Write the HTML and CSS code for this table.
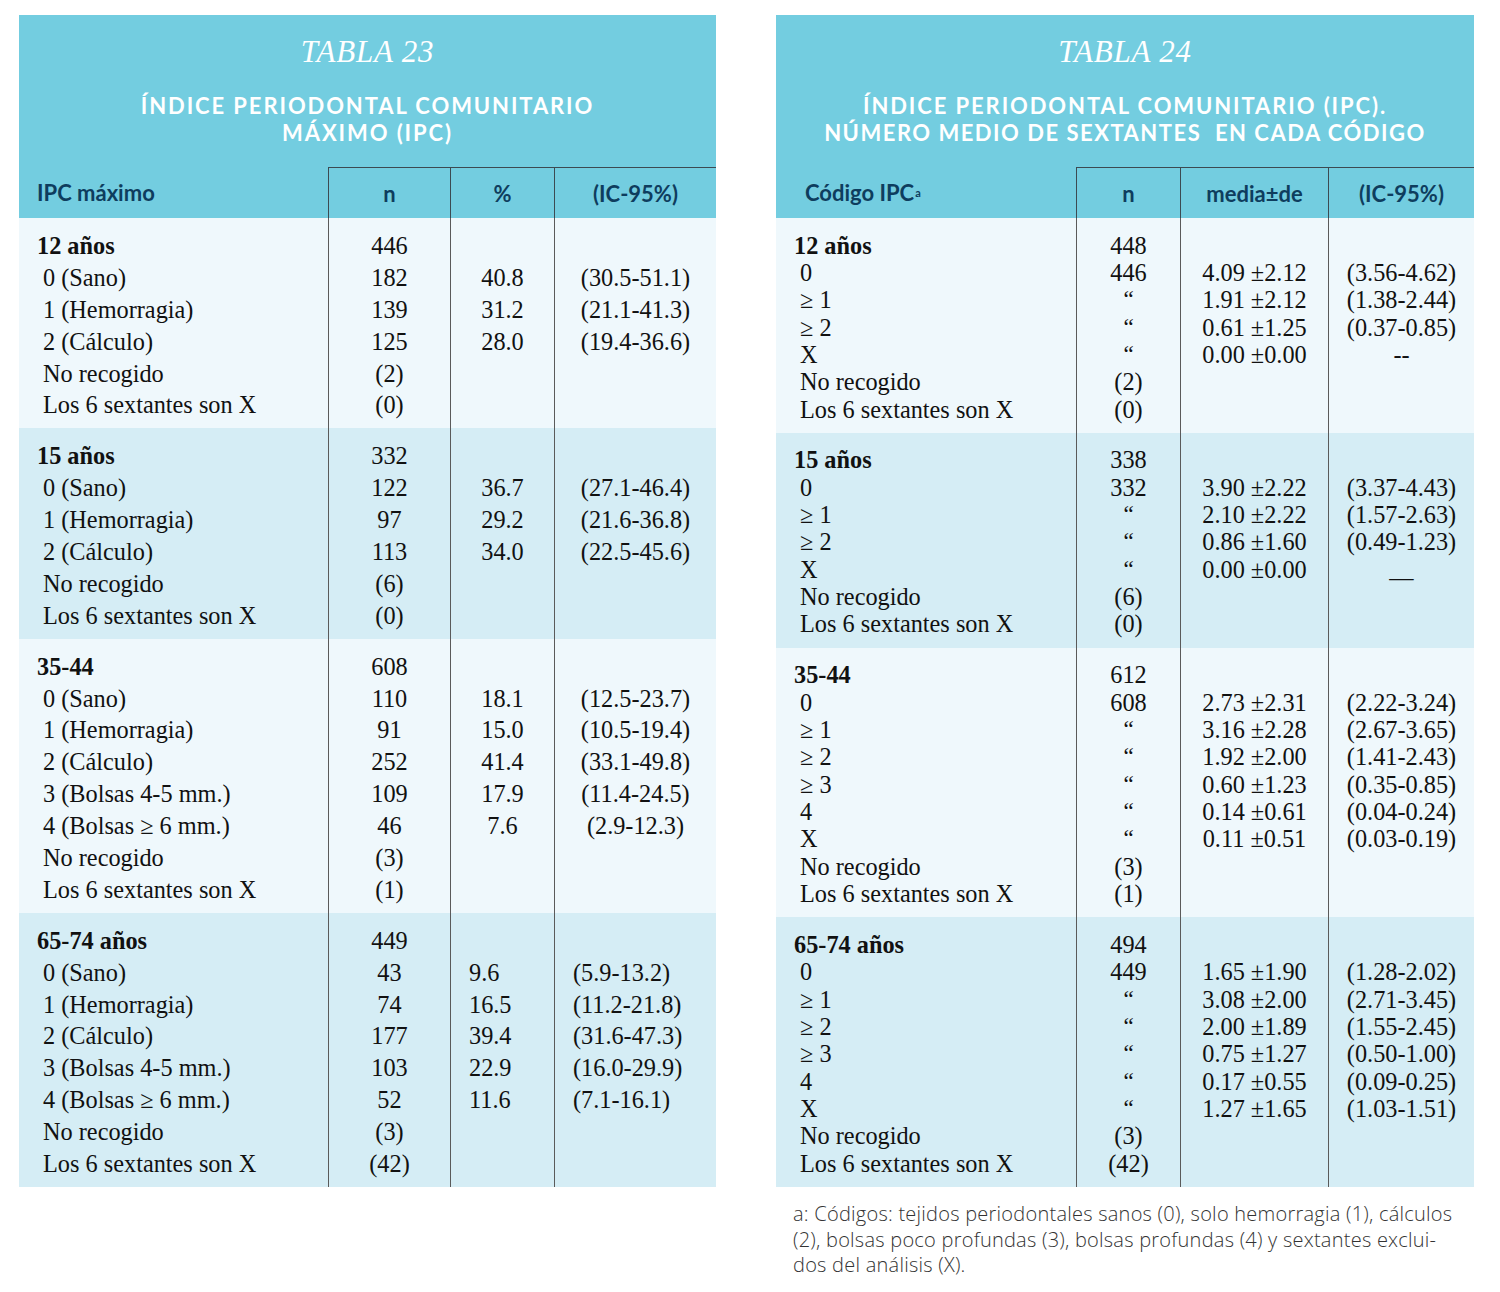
FILE: index.html
```html
<!DOCTYPE html>
<html lang="es">
<head>
<meta charset="utf-8">
<title>Tablas 23 y 24</title>
<link rel="stylesheet" href="styles.css">
</head>
<body>
<div class="page">
  <section class="tbl t23">
    <div class="thead">
      <div class="title">TABLA 23</div>
      <div class="subtitle">ÍNDICE PERIODONTAL COMUNITARIO<br>MÁXIMO (IPC)</div>
    </div>
    <div class="grid colhead">
      <div class="h1">IPC máximo</div><div class="hc">n</div><div class="hc">%</div><div class="hc">(IC-95%)</div>
    </div>
    <div class="grid group light">
      <div class="col lab"><div class="b">12 años</div><div>0 (Sano)</div><div>1 (Hemorragia)</div><div>2 (Cálculo)</div><div>No recogido</div><div>Los 6 sextantes son X</div></div>
      <div class="col num"><div>446</div><div>182</div><div>139</div><div>125</div><div>(2)</div><div>(0)</div></div>
      <div class="col num"><div></div><div>40.8</div><div>31.2</div><div>28.0</div></div>
      <div class="col num"><div></div><div>(30.5-51.1)</div><div>(21.1-41.3)</div><div>(19.4-36.6)</div></div>
    </div>
    <div class="grid group dark">
      <div class="col lab"><div class="b">15 años</div><div>0 (Sano)</div><div>1 (Hemorragia)</div><div>2 (Cálculo)</div><div>No recogido</div><div>Los 6 sextantes son X</div></div>
      <div class="col num"><div>332</div><div>122</div><div>97</div><div>113</div><div>(6)</div><div>(0)</div></div>
      <div class="col num"><div></div><div>36.7</div><div>29.2</div><div>34.0</div></div>
      <div class="col num"><div></div><div>(27.1-46.4)</div><div>(21.6-36.8)</div><div>(22.5-45.6)</div></div>
    </div>
    <div class="grid group light">
      <div class="col lab"><div class="b">35-44</div><div>0 (Sano)</div><div>1 (Hemorragia)</div><div>2 (Cálculo)</div><div>3 (Bolsas 4-5 mm.)</div><div>4 (Bolsas ≥ 6 mm.)</div><div>No recogido</div><div>Los 6 sextantes son X</div></div>
      <div class="col num"><div>608</div><div>110</div><div>91</div><div>252</div><div>109</div><div>46</div><div>(3)</div><div>(1)</div></div>
      <div class="col num"><div></div><div>18.1</div><div>15.0</div><div>41.4</div><div>17.9</div><div>7.6</div></div>
      <div class="col num"><div></div><div>(12.5-23.7)</div><div>(10.5-19.4)</div><div>(33.1-49.8)</div><div>(11.4-24.5)</div><div>(2.9-12.3)</div></div>
    </div>
    <div class="grid group dark">
      <div class="col lab"><div class="b">65-74 años</div><div>0 (Sano)</div><div>1 (Hemorragia)</div><div>2 (Cálculo)</div><div>3 (Bolsas 4-5 mm.)</div><div>4 (Bolsas ≥ 6 mm.)</div><div>No recogido</div><div>Los 6 sextantes son X</div></div>
      <div class="col num"><div>449</div><div>43</div><div>74</div><div>177</div><div>103</div><div>52</div><div>(3)</div><div>(42)</div></div>
      <div class="col left"><div></div><div>9.6</div><div>16.5</div><div>39.4</div><div>22.9</div><div>11.6</div></div>
      <div class="col left"><div></div><div>(5.9-13.2)</div><div>(11.2-21.8)</div><div>(31.6-47.3)</div><div>(16.0-29.9)</div><div>(7.1-16.1)</div></div>
    </div>
  </section>

  <div class="rightcol">
    <section class="tbl t24">
      <div class="thead">
        <div class="title">TABLA 24</div>
        <div class="subtitle">ÍNDICE PERIODONTAL COMUNITARIO (IPC).<br><span class="tight">NÚMERO MEDIO DE SEXTANTES&nbsp; EN CADA CÓDIGO</span></div>
      </div>
      <div class="grid colhead">
        <div class="h1">Código IPC<sup>a</sup></div><div class="hc">n</div><div class="hc">media±de</div><div class="hc">(IC-95%)</div>
      </div>
      <div class="grid group light">
        <div class="col lab"><div class="b">12 años</div><div>0</div><div>≥ 1</div><div>≥ 2</div><div>X</div><div>No recogido</div><div>Los 6 sextantes son X</div></div>
        <div class="col num"><div>448</div><div>446</div><div class="q">“</div><div class="q">“</div><div class="q">“</div><div>(2)</div><div>(0)</div></div>
        <div class="col num"><div></div><div>4.09 ±2.12</div><div>1.91 ±2.12</div><div>0.61 ±1.25</div><div>0.00 ±0.00</div></div>
        <div class="col num"><div></div><div>(3.56-4.62)</div><div>(1.38-2.44)</div><div>(0.37-0.85)</div><div>--</div></div>
      </div>
      <div class="grid group dark">
        <div class="col lab"><div class="b">15 años</div><div>0</div><div>≥ 1</div><div>≥ 2</div><div>X</div><div>No recogido</div><div>Los 6 sextantes son X</div></div>
        <div class="col num"><div>338</div><div>332</div><div class="q">“</div><div class="q">“</div><div class="q">“</div><div>(6)</div><div>(0)</div></div>
        <div class="col num"><div></div><div>3.90 ±2.22</div><div>2.10 ±2.22</div><div>0.86 ±1.60</div><div>0.00 ±0.00</div></div>
        <div class="col num"><div></div><div>(3.37-4.43)</div><div>(1.57-2.63)</div><div>(0.49-1.23)</div><div><span class="low">—</span></div></div>
      </div>
      <div class="grid group light">
        <div class="col lab"><div class="b">35-44</div><div>0</div><div>≥ 1</div><div>≥ 2</div><div>≥ 3</div><div>4</div><div>X</div><div>No recogido</div><div>Los 6 sextantes son X</div></div>
        <div class="col num"><div>612</div><div>608</div><div class="q">“</div><div class="q">“</div><div class="q">“</div><div class="q">“</div><div class="q">“</div><div>(3)</div><div>(1)</div></div>
        <div class="col num"><div></div><div>2.73 ±2.31</div><div>3.16 ±2.28</div><div>1.92 ±2.00</div><div>0.60 ±1.23</div><div>0.14 ±0.61</div><div>0.11 ±0.51</div></div>
        <div class="col num"><div></div><div>(2.22-3.24)</div><div>(2.67-3.65)</div><div>(1.41-2.43)</div><div>(0.35-0.85)</div><div>(0.04-0.24)</div><div>(0.03-0.19)</div></div>
      </div>
      <div class="grid group dark">
        <div class="col lab"><div class="b">65-74 años</div><div>0</div><div>≥ 1</div><div>≥ 2</div><div>≥ 3</div><div>4</div><div>X</div><div>No recogido</div><div>Los 6 sextantes son X</div></div>
        <div class="col num"><div>494</div><div>449</div><div class="q">“</div><div class="q">“</div><div class="q">“</div><div class="q">“</div><div class="q">“</div><div>(3)</div><div>(42)</div></div>
        <div class="col num"><div></div><div>1.65 ±1.90</div><div>3.08 ±2.00</div><div>2.00 ±1.89</div><div>0.75 ±1.27</div><div>0.17 ±0.55</div><div>1.27 ±1.65</div></div>
        <div class="col num"><div></div><div>(1.28-2.02)</div><div>(2.71-3.45)</div><div>(1.55-2.45)</div><div>(0.50-1.00)</div><div>(0.09-0.25)</div><div>(1.03-1.51)</div></div>
      </div>
    </section>
    <p class="note">a: Códigos: tejidos periodontales sanos (0), solo hemorragia (1), cálculos<br>(2), bolsas poco profundas (3), bolsas profundas (4) y sextantes exclui-<br>dos del análisis (X).</p>
  </div>
</div>
</body>
</html>
```

FILE: styles.css
```css
html, body {
  margin: 0;
  padding: 0;
  background: #ffffff;
}

.page {
  display: flex;
  align-items: flex-start;
  gap: 60px;
  padding: 15px 0 0 19px;
}

.tbl {
  font-family: "Liberation Serif", "Times New Roman", serif;
  color: #111111;
}

.t23 { width: 697px; }
.t24 { width: 698px; }

.thead {
  background: #73cde0;
  height: 152px;
  box-sizing: border-box;
  padding-top: 20px;
  text-align: center;
  color: #ffffff;
}

.title {
  font-family: "Liberation Serif", serif;
  font-style: italic;
  font-size: 31px;
  line-height: 34px;
  letter-spacing: 0.8px;
}

.subtitle {
  margin-top: 23px;
  font-family: Lato, "Open Sans", sans-serif;
  font-weight: 700;
  font-size: 22px;
  line-height: 27px;
  letter-spacing: 1.9px;
}

.subtitle .tight {
  letter-spacing: 1.5px;
}

.grid {
  display: grid;
}

.t23 .grid { grid-template-columns: 309px 122px 104px 162px; }
.t24 .grid { grid-template-columns: 300px 104px 148px 146px; }

.colhead {
  background: #73cde0;
  height: 51px;
  font-family: Lato, "Open Sans", sans-serif;
  font-weight: 700;
  font-size: 22px;
  color: #0e3d5e;
}

.colhead > div {
  display: flex;
  align-items: center;
  box-sizing: border-box;
}

.colhead .h1 {
  padding-left: 18px;
}

.t24 .colhead .h1 {
  padding-left: 29px;
}

.colhead sup {
  font-size: 11px;
  vertical-align: 7px;
  margin-left: 1px;
}

.colhead .hc {
  justify-content: center;
  border-left: 1px solid #3c4a52;
  border-top: 1px solid #3c4a52;
}

.light { background: #eff8fc; }
.dark { background: #d5edf5; }

.col {
  box-sizing: border-box;
  font-size: 24.3px;
  white-space: nowrap;
}

.col + .col {
  border-left: 1px solid #5a5a5a;
}

.t23 .col {
  padding: 12px 0 7px;
}

.t23 .col > div {
  height: 31.9px;
  line-height: 31.9px;
}

.t24 .col {
  padding: 13.5px 0 10px;
}

.t24 .col > div {
  height: 27.35px;
  line-height: 27.35px;
}

.lab {
  padding-left: 24px !important;
}

.lab .b {
  font-weight: 700;
  margin-left: -6px;
}

.num { text-align: center; }

.left {
  text-align: left;
  padding-left: 18px !important;
}

.q {
  font-size: 23px;
}

.low {
  display: inline-block;
  line-height: 0;
  vertical-align: -8px;
}

.note {
  margin: 14px 0 0 17px;
  font-family: "Open Sans", sans-serif;
  font-weight: 300;
  font-size: 20px;
  line-height: 25.5px;
  color: #333333;
  letter-spacing: 0.24px;
}
```
